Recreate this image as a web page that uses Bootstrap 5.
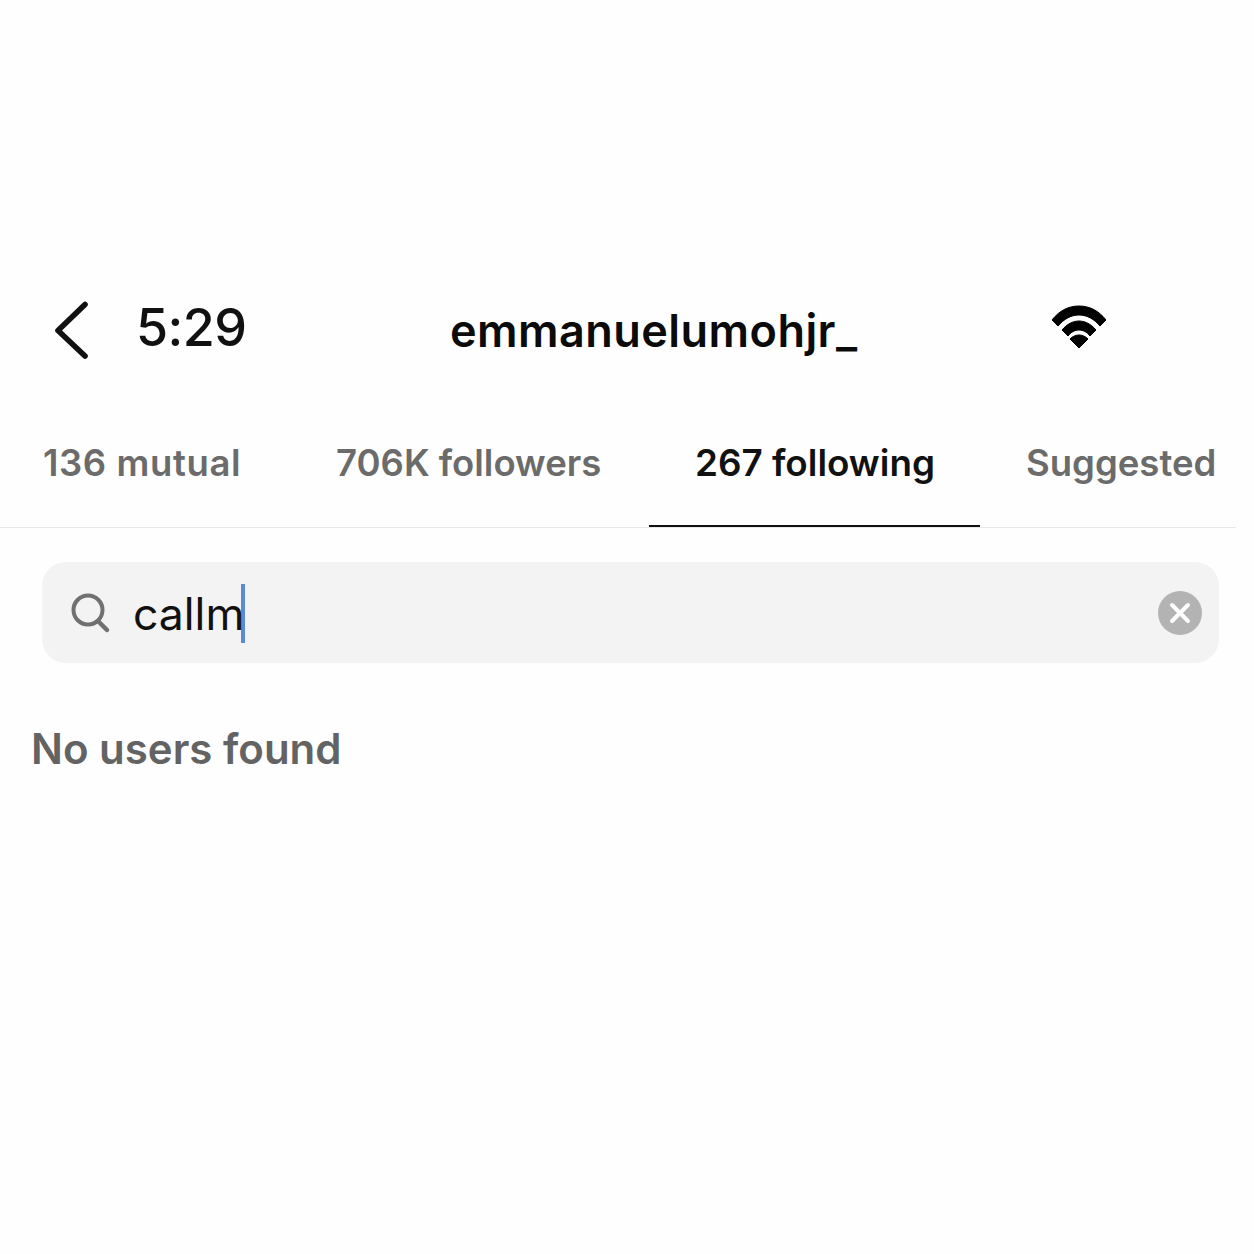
<!DOCTYPE html>
<html lang="en">
<head>
<meta charset="utf-8">
<title>emmanuelumohjr_</title>
<link href="https://cdn.jsdelivr.net/npm/bootstrap@5.3.0/dist/css/bootstrap.min.css" rel="stylesheet">
<style>
html,body{background:#fefefe;}
body{width:1254px;height:1254px;overflow:hidden;font-family:Inter,"Liberation Sans",sans-serif;}
.screen{padding-top:298px;}
.topbar{height:64px;position:relative;}
.back-ic{margin-left:52px;width:40px;height:64px;flex:none;}
.clock{margin-left:44px;font-size:52px;font-weight:500;line-height:60px;color:#111;letter-spacing:-.6px;width:270px;flex:none;}
.handle{margin-left:44px;font-size:45px;font-weight:600;line-height:64px;color:#0b0b0b;letter-spacing:.45px;padding-top:1px;white-space:nowrap;}
.wifi-ic{position:absolute;left:1050px;top:4px;width:58px;height:48px;}
.tabbar{margin-top:64px;height:102px;width:1236px;border-bottom:1px solid #e9e9e9;position:relative;}
.tabitem{position:absolute;top:0;height:102px;font-size:36.5px;font-weight:600;color:#6b6b6b;line-height:75px;white-space:nowrap;}
.tabitem.sel{color:#111;font-size:36.8px;line-height:74px;}
.tabitem.spaced{letter-spacing:.6px;}
.tabline{position:absolute;left:649px;width:331px;bottom:0;height:2px;background:#111;}
.searchbox{margin:34px 0 0 42px;width:1177px;height:101px;border-radius:24px;background:#f3f3f3;padding:0 17px 0 27px;}
.typed{margin-left:22px;margin-top:2px;font-size:44.5px;color:#111;line-height:61px;border-right:4px solid #5b8bd0;height:59px;}
.typed-txt{margin-right:-3px;}
.clear-ic{width:44px;height:44px;flex:none;}
.empty{margin:56px 0 0 31px;font-size:42px;font-weight:600;line-height:60px;color:#636363;}
</style>
</head>
<body>
<div class="screen">
  <div class="topbar d-flex align-items-start">
    <svg class="back-ic" viewBox="0 0 40 64"><path d="M33 6.5 6 32.5 33 58" fill="none" stroke="#111" stroke-width="5.6" stroke-linecap="round" stroke-linejoin="round"/></svg>
    <div class="clock">5:29</div>
    <div class="handle">emmanuelumohjr_</div>
    <svg class="wifi-ic" viewBox="0 0 58 48"><path d="M2 18C9 9 18 4 29 4S49 9 56 18L50 24C44 17 37 13 29 13S14 17 8 24Z M12 28C17 22 23 19 29 19S41 22 46 28L40 34C37 30 33 28 29 28S21 30 18 34Z M20 37C23 34 26 33 29 33S35 34 38 37L29 46Z" fill="#000" stroke="#000" stroke-linejoin="round"/></svg>
  </div>
  <div class="tabbar">
    <div class="tabitem spaced" style="left:43px">136 mutual</div>
    <div class="tabitem" style="left:336px">706K followers</div>
    <div class="tabitem sel" style="left:695px">267 following</div>
    <div class="tabitem" style="left:1026px">Suggested</div>
    <div class="tabline"></div>
  </div>
  <div class="searchbox d-flex align-items-center">
    <svg width="42" height="42" viewBox="0 0 42 42" class="flex-shrink-0"><circle cx="19" cy="18" r="14.5" fill="none" stroke="#707070" stroke-width="4"/><path d="M29 29 38 38" stroke="#707070" stroke-width="4.5" stroke-linecap="round"/></svg>
    <div class="typed"><span class="typed-txt">callm</span></div>
    <svg class="clear-ic ms-auto" viewBox="0 0 44 44"><circle cx="22" cy="22" r="22" fill="#b3b3b3"/><path d="M14 14 30 30M30 14 14 30" stroke="#fff" stroke-width="4" stroke-linecap="round"/></svg>
  </div>
  <div class="empty">No users found</div>
</div>
</body>
</html>
